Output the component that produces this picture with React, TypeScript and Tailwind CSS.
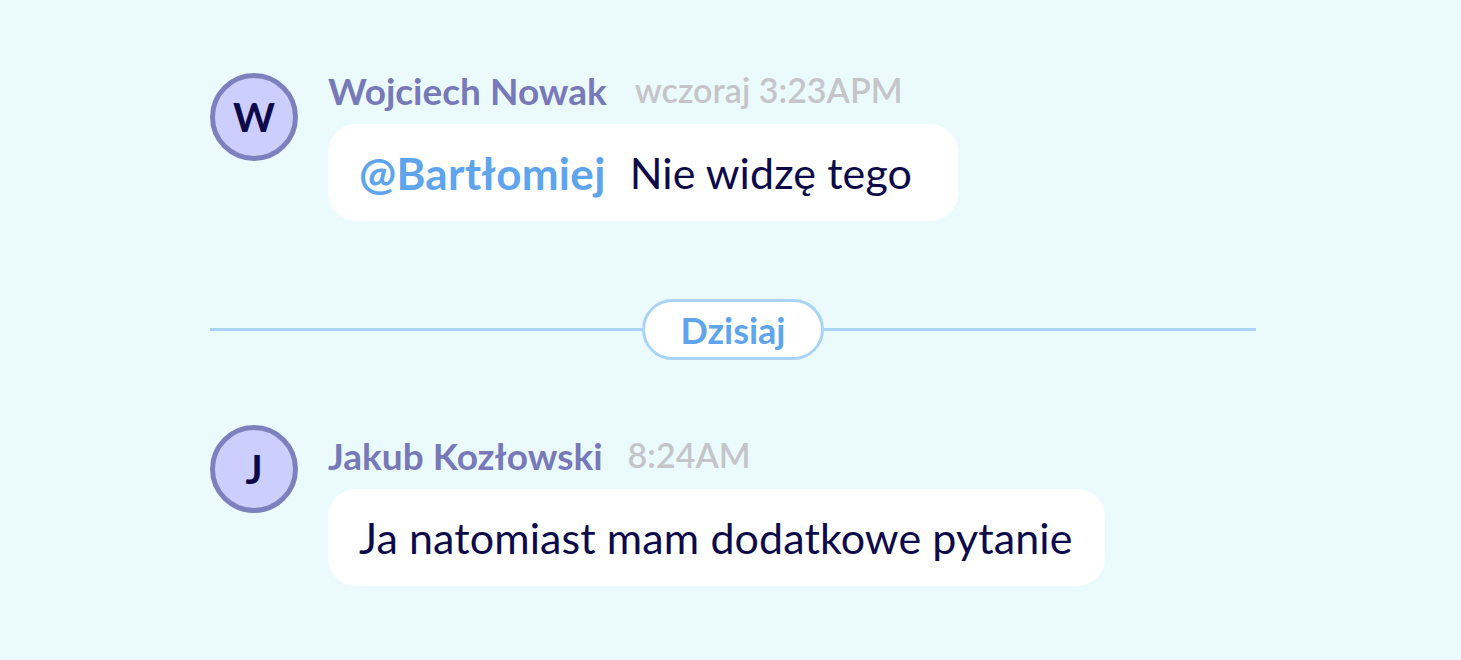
import React from 'react'

type Msg = {
  initial: string
  name: string
  time: string
  mention?: string
  text: string
  offset: string
  padRight: string
  timeGap: string
}

const firstMessage: Msg = {
  initial: 'W',
  name: 'Wojciech Nowak',
  time: 'wczoraj 3:23APM',
  mention: '@Bartłomiej',
  text: 'Nie widzę tego',
  offset: 'mt-[-3px]',
  padRight: 'pr-[46px]',
  timeGap: 'gap-[28px]',
}

const secondMessage: Msg = {
  initial: 'J',
  name: 'Jakub Kozłowski',
  time: '8:24AM',
  text: 'Ja natomiast mam dodatkowe pytanie',
  offset: 'mt-[10px]',
  padRight: 'pr-[32px]',
  timeGap: 'gap-[25px]',
}

function Message({ m }: { m: Msg }) {
  return (
    <div className="flex items-start gap-[30px]">
      <div className="w-[88px] h-[88px] shrink-0 rounded-full bg-[#cccffd] border-[5px] border-[#7e80be] flex items-center justify-center">
        <span className="text-[40px] font-bold text-[#0d0a4a] leading-none">{m.initial}</span>
      </div>
      <div className={`flex flex-col items-start ${m.offset}`}>
        <div className={`h-[40px] flex items-center ${m.timeGap} leading-none`}>
          <span className="text-[37px] font-bold text-[#7779b8]">{m.name}</span>
          <span className="text-[34px] font-semibold text-[#c5c5c9]">{m.time}</span>
        </div>
        <div className={`mt-[14px] h-[97px] bg-white rounded-[28px] pl-[31px] ${m.padRight} flex items-center leading-none`}>
          {m.mention && (
            <span className="text-[44px] font-bold text-[#5ea5ee] mr-[24px] tracking-[0.3px]">{m.mention}</span>
          )}
          <span className="text-[43px] text-[#0d0a4a] tracking-[0.1px]">{m.text}</span>
        </div>
      </div>
    </div>
  )
}

export default function App() {
  return (
    <div
      className="w-[1461px] h-[660px] bg-[#ebfbfd] pl-[210px] pr-[205px] pt-[73px] overflow-hidden"
      style={{ fontFamily: 'Lato, "Noto Sans", sans-serif' }}
    >
      <Message m={firstMessage} />

      <div className="mt-[78px] flex items-center">
        <div className="flex-1 h-[3px] bg-[#a9d3f7]" />
        <div className="h-[61px] w-[182px] rounded-full border-[3px] border-[#a9d3f7] bg-white flex items-center justify-center">
          <span className="text-[36px] font-bold text-[#5ea5ee] leading-none">Dzisiaj</span>
        </div>
        <div className="flex-1 h-[3px] bg-[#a9d3f7]" />
      </div>

      <div className="mt-[65px]">
        <Message m={secondMessage} />
      </div>
    </div>
  )
}
